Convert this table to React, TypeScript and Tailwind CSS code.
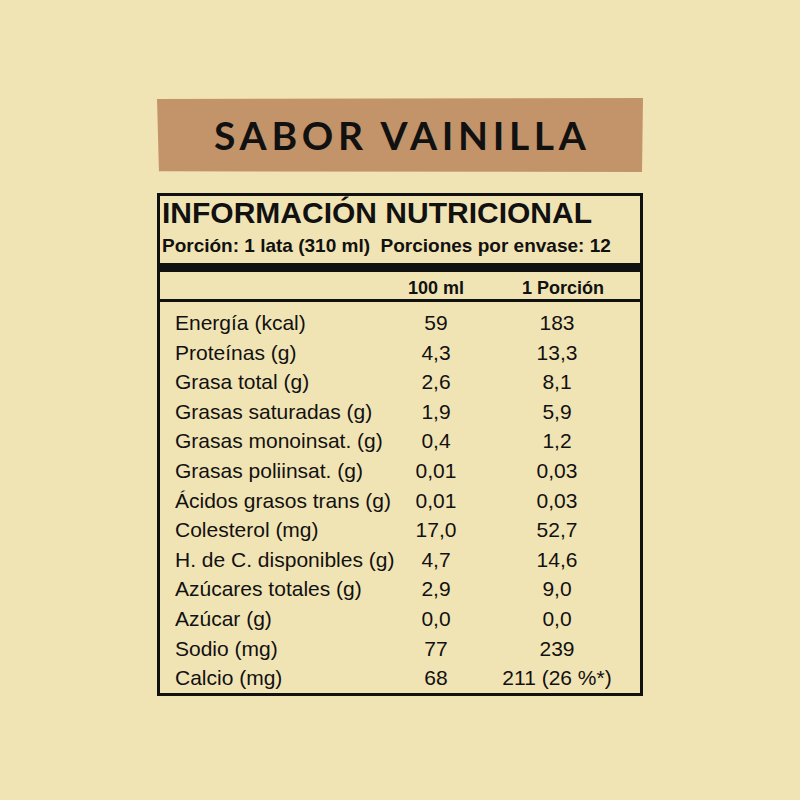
const rows: [string, string, string][] = [
  ["Energía (kcal)", "59", "183"],
  ["Proteínas (g)", "4,3", "13,3"],
  ["Grasa total (g)", "2,6", "8,1"],
  ["Grasas saturadas (g)", "1,9", "5,9"],
  ["Grasas monoinsat. (g)", "0,4", "1,2"],
  ["Grasas poliinsat. (g)", "0,01", "0,03"],
  ["Ácidos grasos trans (g)", "0,01", "0,03"],
  ["Colesterol (mg)", "17,0", "52,7"],
  ["H. de C. disponibles (g)", "4,7", "14,6"],
  ["Azúcares totales (g)", "2,9", "9,0"],
  ["Azúcar (g)", "0,0", "0,0"],
  ["Sodio (mg)", "77", "239"],
  ["Calcio (mg)", "68", "211 (26 %*)"],
];

export default function App() {
  return (
    <div className="w-[800px] h-[800px] bg-[#f1e4b4] flex flex-col items-center pt-[98px] text-[#111]">
      {/* flavour banner */}
      <div className="w-[486px] h-[74px] bg-[#c39469] flex items-center justify-center [clip-path:polygon(0_1px,100%_0,99.8%_100%,0.4%_99%)]">
        <span className="font-['Lato',sans-serif] font-bold text-[39px] tracking-[0.12em] leading-none pl-[0.12em]">
          SABOR VAINILLA
        </span>
      </div>

      {/* nutrition table */}
      <div className="mt-[21px] w-[486px] border-[3px] border-[#111] font-['Liberation_Sans',Arial,sans-serif]">
        <div className="pl-[2px] pt-[2px] pb-[8px]">
          <div className="text-[30px] leading-[30px] font-bold">INFORMACIÓN NUTRICIONAL</div>
          <div className="mt-[8px] text-[19px] leading-[19px] font-bold whitespace-pre">
            {"Porción: 1 lata (310 ml)  Porciones por envase: 12"}
          </div>
        </div>
        <div className="h-[9px] bg-[#111]" />
        <div className="grid grid-cols-[216px_120px_122px] h-[30px] pt-[3px] items-center text-[18px] font-bold border-b-[3px] border-[#111]">
          <div />
          <div className="text-center">100 ml</div>
          <div className="text-center pl-3">1 Porción</div>
        </div>
        <div className="pt-[6px] text-[21px] leading-[29.6px]">
          {rows.map(([label, a, b]) => (
            <div key={label} className="grid grid-cols-[216px_120px_122px]">
              <div className="pl-[15px] whitespace-nowrap">{label}</div>
              <div className="text-center">{a}</div>
              <div className="text-center whitespace-nowrap">{b}</div>
            </div>
          ))}
        </div>
      </div>
    </div>
  );
}
